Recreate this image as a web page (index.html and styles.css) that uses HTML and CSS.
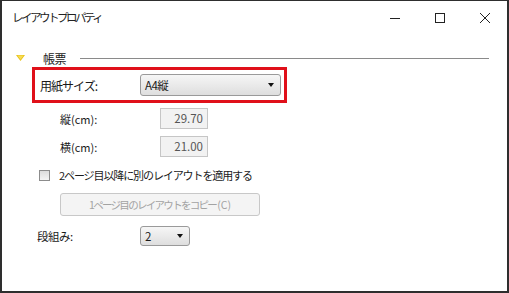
FILE: index.html
```html
<!DOCTYPE html>
<html lang="ja">
<head>
<meta charset="utf-8">
<link rel="stylesheet" href="styles.css">
</head>
<body>
<div class="window">
  <div class="titlebar">
    <div class="title">レイアウトプロパティ</div>
    <div class="controls">
      <div class="ctl"><svg width="12" height="12" viewBox="0 0 12 12"><path d="M1 6.5h10" stroke="#222" stroke-width="1"/></svg></div>
      <div class="ctl"><svg width="12" height="12" viewBox="0 0 12 12"><rect x="1.5" y="1.5" width="9" height="9" fill="none" stroke="#222" stroke-width="1"/></svg></div>
      <div class="ctl"><svg width="12" height="12" viewBox="0 0 12 12"><path d="M1 1L11 11M11 1L1 11" stroke="#222" stroke-width="1"/></svg></div>
    </div>
  </div>
  <div class="content">
    <div class="group-head">
      <svg class="tri" width="9" height="6" viewBox="0 0 9 6"><path d="M0 0H9L4.5 6Z" fill="#e8c21a"/><path d="M1.5 0.5H7.5L4.5 4.5Z" fill="#f7dc55"/></svg>
      <span class="group-title">帳票</span>
      <span class="group-line"></span>
    </div>
    <div class="hl">
      <span class="lbl lbl-main">用紙サイズ:</span>
      <div class="select wide"><span>A4縦</span><span class="arrow"></span></div>
    </div>
    <div class="row sub">
      <span class="lbl lbl-sub">縦(cm):</span>
      <div class="num">29.70</div>
    </div>
    <div class="row sub">
      <span class="lbl lbl-sub">横(cm):</span>
      <div class="num">21.00</div>
    </div>
    <div class="row check-row">
      <span class="checkbox"></span>
      <span class="check-text">2ページ目以降に別のレイアウトを適用する</span>
    </div>
    <div class="row btn-row">
      <div class="btn"><span class="btn-jp">1ページ目のレイアウトをコピー</span><span class="btn-key">(C)</span></div>
    </div>
    <div class="row col-row">
      <span class="lbl lbl-col">段組み:</span>
      <div class="select narrow"><span>2</span><span class="arrow"></span></div>
    </div>
  </div>
</div>
</body>
</html>
```
FILE: styles.css
```css
html, body {
  margin: 0;
  padding: 0;
  background: #fff;
}
body {
  font-family: "Noto Sans CJK JP", "Noto Sans", sans-serif;
  font-size: 11px;
  color: #1a1a1a;
}
.window {
  width: 509px;
  height: 293px;
  box-sizing: border-box;
  border: 2px solid #2e2e2e;
  border-top-width: 1px;
  background: #fff;
  overflow: hidden;
}
.titlebar {
  height: 33px;
  display: flex;
  align-items: center;
  justify-content: space-between;
}
.title {
  padding-left: 10px;
  font-size: 11.5px;
  letter-spacing: -2.5px;
  color: #222;
  margin-top: -1px;
}
.controls {
  display: flex;
  height: 100%;
}
.ctl {
  width: 45px;
  display: flex;
  align-items: center;
  justify-content: center;
}
.content {
  padding: 16px 0 0 0;
}
.group-head {
  display: flex;
  align-items: center;
  height: 16px;
}
.tri {
  margin-left: 14px;
}
.group-title {
  margin-left: 18px;
  font-size: 12px;
  letter-spacing: -0.5px;
}
.group-line {
  flex: 1;
  height: 1px;
  background: #8a8a8a;
  margin: 0 18px 0 14px;
}
.hl {
  margin: 1px 0 0 30px;
  width: 255px;
  height: 36px;
  box-sizing: border-box;
  border: 3px solid #e0101a;
  display: flex;
  align-items: center;
}
.lbl {
  white-space: nowrap;
}
.lbl-main {
  margin-left: 5px;
  width: 100px;
  font-size: 12px;
  letter-spacing: -1px;
}
.select {
  height: 22px;
  box-sizing: border-box;
  border: 1px solid #9a9a9a;
  border-radius: 3px;
  background: linear-gradient(#f6f6f6, #dedede);
  display: flex;
  align-items: center;
  justify-content: space-between;
  padding: 0 6px 0 4px;
  font-size: 11.5px;
  letter-spacing: -0.5px;
}
.wide { width: 141px; }
.narrow { width: 50px; }
.arrow {
  width: 0;
  height: 0;
  border-left: 3.5px solid transparent;
  border-right: 3.5px solid transparent;
  border-top: 4px solid #111;
}
.row {
  display: flex;
  align-items: center;
}
.sub {
  height: 21px;
  margin-top: 5px;
}
.sub + .sub {
  margin-top: 7px;
}
.lbl-sub {
  margin-left: 58px;
  width: 100px;
  font-size: 11px;
  letter-spacing: 0;
}
.num {
  width: 48px;
  height: 21px;
  box-sizing: border-box;
  border: 1px solid #c6c6c6;
  background: #f2f2f2;
  color: #555;
  text-align: right;
  padding-right: 4px;
  line-height: 19px;
  font-size: 11.5px;
}
.check-row {
  margin-top: 11px;
  height: 14px;
}
.checkbox {
  margin-left: 37px;
  width: 11px;
  height: 11px;
  box-sizing: border-box;
  border: 1px solid #8c8c8c;
  background: linear-gradient(#dcdcdc, #f4f4f4);
}
.check-text {
  margin-left: 9px;
  font-size: 11px;
  letter-spacing: -1.1px;
}
.btn-row {
  margin-top: 11px;
}
.btn {
  margin-left: 58px;
  width: 200px;
  height: 23px;
  box-sizing: border-box;
  border: 1px solid #c8c8c8;
  border-radius: 3px;
  background: #f4f4f4;
  color: #a3a3a3;
  font-size: 10.5px;
  display: flex;
  align-items: center;
  justify-content: center;
}
.btn-jp {
  letter-spacing: -1.7px;
}
.btn-key {
  margin-left: 1px;
  letter-spacing: 0;
}
.col-row {
  margin-top: 10px;
}
.lbl-col {
  margin-left: 35px;
  width: 103px;
  font-size: 11.5px;
  letter-spacing: -0.5px;
}
.narrow {
  height: 20px;
}
```
